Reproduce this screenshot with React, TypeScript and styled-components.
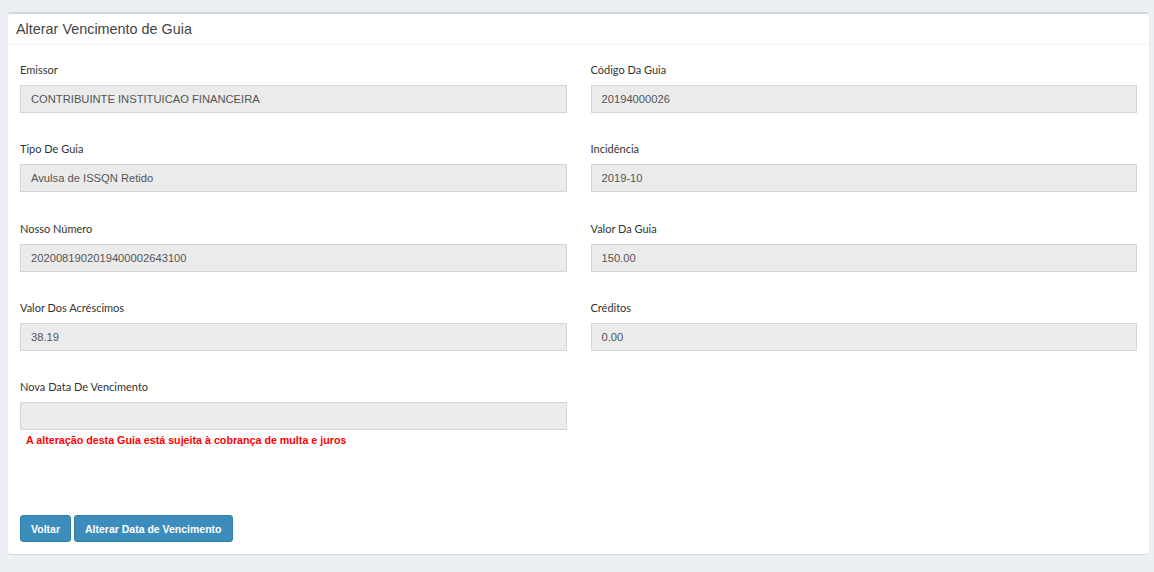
import React from 'react';
import styled, { createGlobalStyle } from 'styled-components';

const GlobalStyle = createGlobalStyle`
	html, body {
		margin: 0;
		padding: 0;
		background-color: #ecf0f5;
	}
	body {
		font-family: 'Liberation Sans', Arial, sans-serif;
	}
`;

// 카드 박스
const StyledBox = styled.div`
	margin: 12px 5px 19px 8px;
	background-color: #fff;
	border-top: solid 2px #d2d6de;
	border-radius: 3px;
	box-shadow: 0 1px 1px rgba(0, 0, 0, 0.1);
`;

const StyledBoxHeader = styled.div`
	display: flex;
	align-items: center;
	height: 30px;
	padding: 0 8px;
	border-bottom: solid 1px #f4f4f4;
`;

const StyledTitle = styled.h3`
	margin: 0;
	font-size: 14.4px;
	font-weight: normal;
	color: #444;
`;

const StyledBoxBody = styled.div`
	padding: 16px 12px 12px;
`;

const StyledGrid = styled.div`
	display: grid;
	grid-template-columns: 1fr 1fr;
	column-gap: 24px;
`;

const StyledField = styled.div`
	display: flex;
	flex-direction: column;
	height: 79.25px;
`;

const StyledLabel = styled.label`
	height: 17px;
	margin-bottom: 7px;
	font-family: 'Lato', 'Liberation Sans', sans-serif;
	font-size: 11px;
	line-height: 17px;
	color: #333;
`;

const StyledInput = styled.div`
	box-sizing: border-box;
	height: 28px;
	padding: 0 10px;
	border: solid 1px #d2d6de;
	background-color: #ebebeb;
	font-size: 11.2px;
	line-height: 26px;
	color: #555;
	white-space: nowrap;
	overflow: hidden;
`;

const StyledWarning = styled.p`
	margin: 3px 0 0 6px;
	font-size: 10.7px;
	font-weight: bold;
	line-height: 14px;
	color: #ff0000;
`;

const StyledFooter = styled.div`
	display: flex;
	gap: 3px;
	margin-top: 58px;
`;

const StyledButton = styled.button`
	height: 27px;
	padding: 0 10px;
	border: solid 1px #367fa9;
	border-radius: 3px;
	background-color: #3c8dbc;
	color: #fff;
	font-family: 'Liberation Sans', Arial, sans-serif;
	font-size: 10.5px;
	font-weight: bold;
	cursor: pointer;
`;

const fields = [
	{ label: 'Emissor', value: 'CONTRIBUINTE INSTITUICAO FINANCEIRA' },
	{ label: 'Código Da Guia', value: '20194000026' },
	{ label: 'Tipo De Guia', value: 'Avulsa de ISSQN Retido' },
	{ label: 'Incidência', value: '2019-10' },
	{ label: 'Nosso Número', value: '2020081902019400002643100' },
	{ label: 'Valor Da Guia', value: '150.00' },
	{ label: 'Valor Dos Acréscimos', value: '38.19' },
	{ label: 'Créditos', value: '0.00' },
];

const App = () => {
	return (
		<>
			<GlobalStyle />
			<StyledBox>
				<StyledBoxHeader>
					<StyledTitle>Alterar Vencimento de Guia</StyledTitle>
				</StyledBoxHeader>
				<StyledBoxBody>
					<StyledGrid>
						{fields.map((f) => (
							<StyledField key={f.label}>
								<StyledLabel>{f.label}</StyledLabel>
								<StyledInput>{f.value}</StyledInput>
							</StyledField>
						))}
						<StyledField>
							<StyledLabel>Nova Data De Vencimento</StyledLabel>
							<StyledInput />
							<StyledWarning>A alteração desta Guia está sujeita à cobrança de multa e juros</StyledWarning>
						</StyledField>
					</StyledGrid>
					<StyledFooter>
						<StyledButton>Voltar</StyledButton>
						<StyledButton>Alterar Data de Vencimento</StyledButton>
					</StyledFooter>
				</StyledBoxBody>
			</StyledBox>
		</>
	);
};

export default App;
